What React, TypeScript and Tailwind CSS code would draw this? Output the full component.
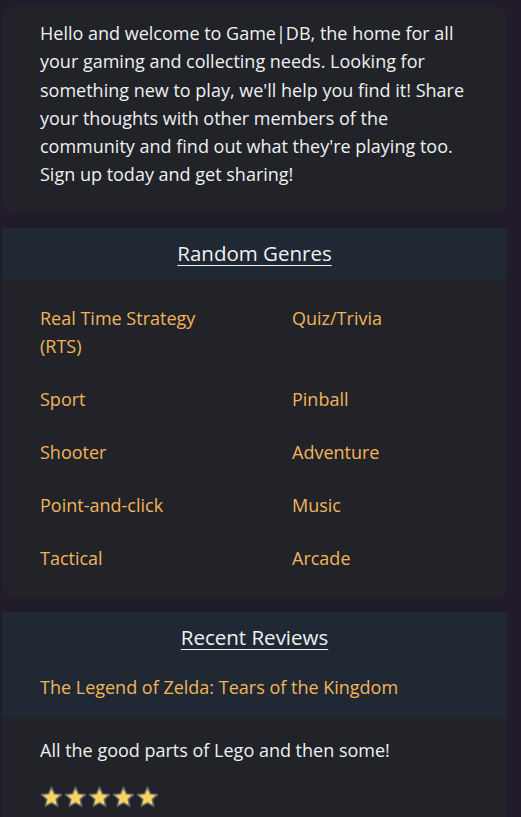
import React from 'react';

const genres = [
  ['Real Time Strategy (RTS)', 'Quiz/Trivia'],
  ['Sport', 'Pinball'],
  ['Shooter', 'Adventure'],
  ['Point-and-click', 'Music'],
  ['Tactical', 'Arcade'],
];

const Star = () => (
  <svg width="23" height="22" viewBox="0 0 24 23">
    <path
      d="M12 1.5l3.1 6.6 7.2.9-5.3 5 1.4 7.1L12 17.6l-6.4 3.5 1.4-7.1-5.3-5 7.2-.9z"
      fill="#f7d460"
      stroke="#6b6b6b"
      strokeWidth="1.6"
      strokeLinejoin="round"
    />
  </svg>
);

const App = () => {
  return (
    <div
      className="min-h-[817px] bg-[#221b2a] text-[#eef0f2] pt-[6px] pl-[2px] pr-[14px]"
      style={{ fontFamily: '"Open Sans", "Noto Sans", sans-serif' }}
    >
      <section className="bg-[#212328] rounded-xl px-[38px] pt-[13px] pb-[24px]">
        <p className="text-[18px] leading-[28.3px]">
          Hello and welcome to Game|DB, the home for all your gaming and collecting needs. Looking for
          something new to play, we'll help you find it! Share your thoughts with other members of the
          community and find out what they're playing too. Sign up today and get sharing!
        </p>
      </section>

      <section className="mt-[15px] bg-[#212328] rounded-b-xl">
        <div className="bg-[#1f2833] h-[51px] flex items-center justify-center">
          <h2 className="text-[20.5px] underline underline-offset-[4px] decoration-1">Random Genres</h2>
        </div>
        <div className="grid grid-cols-[200px_1fr] gap-x-[52px] gap-y-[25px] px-[38px] pt-[25px] pb-[26px] text-[#f2b45a] text-[18px] leading-[28px]">
          {genres.map(([a, b]) => (
            <React.Fragment key={a}>
              <span>{a}</span>
              <span>{b}</span>
            </React.Fragment>
          ))}
        </div>
      </section>

      <section className="mt-[14px] bg-[#212328]">
        <div className="bg-[#1f2833] pt-[11px] pb-[16px] px-[38px]">
          <h2 className="text-[20.5px] text-center underline underline-offset-[4px] decoration-1 leading-[28px]">
            Recent Reviews
          </h2>
          <p className="mt-[22px] text-[18px] leading-[28px] text-[#f2b45a]">
            The Legend of Zelda: Tears of the Kingdom
          </p>
        </div>
        <div className="px-[38px] pt-[19px] pb-[20px]">
          <p className="text-[18px] leading-[28px]">All the good parts of Lego and then some!</p>
          <div className="mt-[22px] flex gap-[1px]">
            <Star />
            <Star />
            <Star />
            <Star />
            <Star />
          </div>
        </div>
      </section>
    </div>
  );
};

export default App;
